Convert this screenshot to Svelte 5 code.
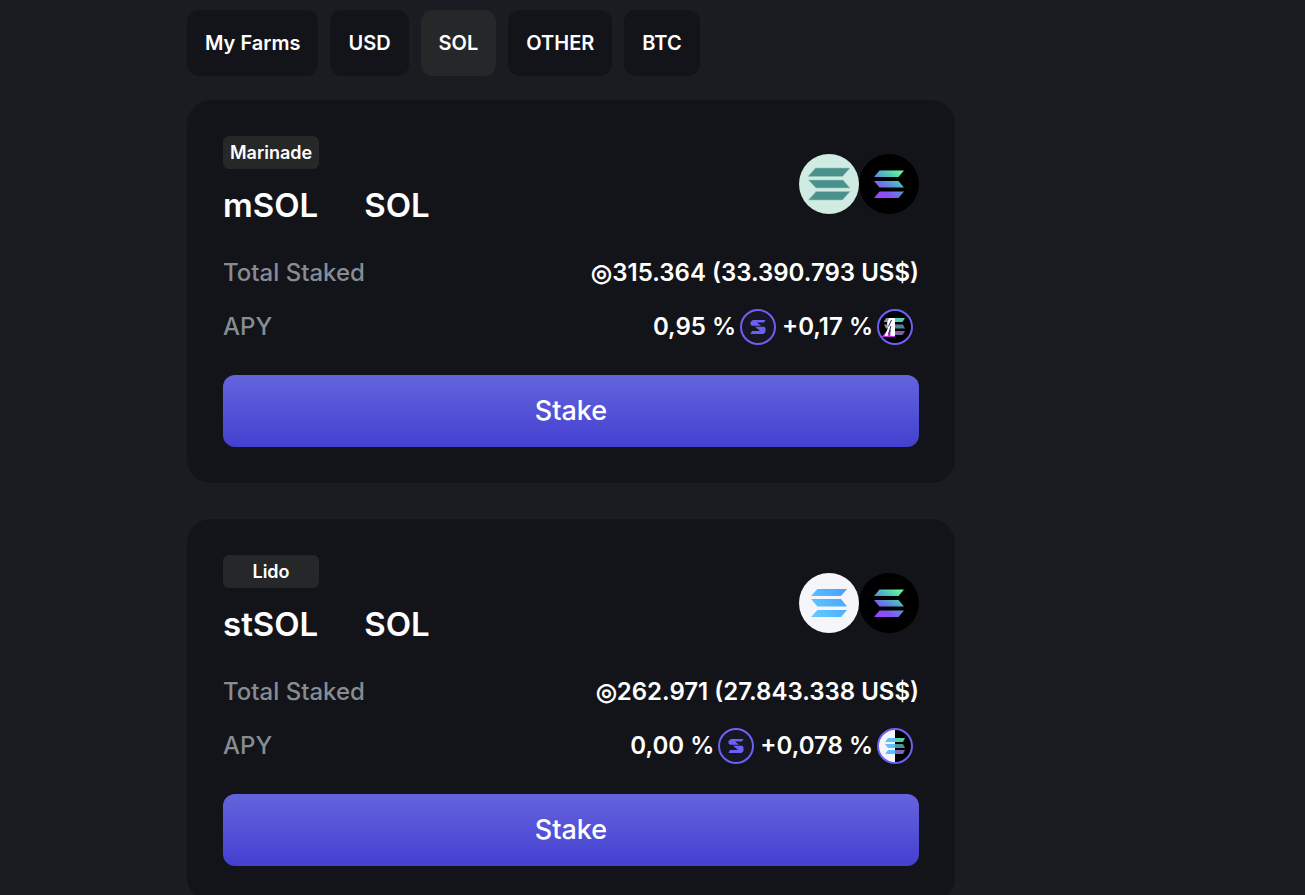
<script>
  const tabs = ['My Farms', 'USD', 'SOL', 'OTHER', 'BTC'];

  const farms = [
    {
      platform: 'Marinade',
      token: 'mSOL',
      pair: 'SOL',
      staked: '◎315.364 (33.390.793 US$)',
      apy: '0,95 %',
      bonus: '+0,17 %'
    },
    {
      platform: 'Lido',
      token: 'stSOL',
      pair: 'SOL',
      staked: '◎262.971 (27.843.338 US$)',
      apy: '0,00 %',
      bonus: '+0,078 %'
    }
  ];

  let activeTab = 'SOL';
</script>

<svelte:head>
  <title>Farms</title>
</svelte:head>

<!-- Gradients shared by the token icons -->
<svg class="defs" width="0" height="0" aria-hidden="true">
  <defs>
    <linearGradient id="sol" gradientUnits="userSpaceOnUse" x1="19" y1="44" x2="38" y2="15">
      <stop offset="0" stop-color="#9945ff" />
      <stop offset="0.25" stop-color="#8752f3" />
      <stop offset="0.5" stop-color="#5c8fdb" />
      <stop offset="0.7" stop-color="#4fc0bd" />
      <stop offset="1" stop-color="#66fb9c" />
    </linearGradient>
    <linearGradient id="lido" gradientUnits="userSpaceOnUse" x1="12" y1="42" x2="46" y2="16">
      <stop offset="0" stop-color="#62cdff" />
      <stop offset="1" stop-color="#489fff" />
    </linearGradient>
    <clipPath id="circle">
      <circle cx="18" cy="18" r="17" />
    </clipPath>
  </defs>
</svg>

<main>
  <nav class="tabs">
    {#each tabs as tab}
      <button class="tab" class:active={tab === activeTab} on:click={() => (activeTab = tab)}>
        {tab}
      </button>
    {/each}
  </nav>

  {#each farms as farm}
    <section class="card">
      <header>
        <div>
          <span class="platform">{farm.platform}</span>
          <h2><span>{farm.token}</span><span>{farm.pair}</span></h2>
        </div>
        <div class="tokens">
          {#if farm.token === 'mSOL'}
            <svg width="60" height="60" viewBox="0 0 60 60" aria-hidden="true">
              <circle cx="30" cy="30" r="30" fill="#d0ece2" />
              <g fill="#4a918d" stroke="#9bc6be" stroke-width="0.6">
                <path d="M16.500 14H51L43.500 22.500H9Z" />
                <path d="M9.500 26H44L51 34H17Z" />
                <path d="M17 37.500H51L43.500 46H9.500Z" />
              </g>
            </svg>
          {:else}
            <svg width="60" height="60" viewBox="0 0 60 60" aria-hidden="true">
              <circle cx="30" cy="30" r="30" fill="#f4f6fa" />
              <g fill="url(#lido)">
                <path d="M18.500 16H48L42 23H12Z" />
                <path d="M12 26H42L48 33.500H18.500Z" />
                <path d="M18.500 37H48L42 44H12Z" />
              </g>
            </svg>
          {/if}
          <svg width="60" height="60" viewBox="0 0 60 60" aria-hidden="true">
            <circle cx="30" cy="30" r="30" fill="#000" />
            <g fill="url(#sol)">
              <path d="M20.500 16.500H45L39.500 23H15Z" />
              <path d="M15 27H39.500L45 33.500H20.500Z" />
              <path d="M20.500 37.500H45L39.500 44H15Z" />
            </g>
          </svg>
        </div>
      </header>

      <dl>
        <div class="row">
          <dt>Total Staked</dt>
          <dd>{farm.staked}</dd>
        </div>
        <div class="row">
          <dt>APY</dt>
          <dd>
            {farm.apy}
            <svg class="reward" width="36" height="36" viewBox="0 0 36 36" aria-hidden="true">
              <circle cx="18" cy="18" r="17" fill="#171624" stroke="#6b62f5" stroke-width="2" />
              <g fill="#6b62f5">
                <path d="M13 11H25.500L24 13.500H17L21 16.800H12L10.500 15.500V13Z" />
                <path d="M15 17.800H24L25.500 19V23L23.500 25H10.500L12 22H20Z" />
              </g>
            </svg>
            {farm.bonus}
            <svg class="reward" width="36" height="36" viewBox="0 0 36 36" aria-hidden="true">
              <g clip-path="url(#circle)">
                <rect width="36" height="36" fill="#000" />
                {#if farm.token === 'mSOL'}
                  <path fill="#5bcfad" d="M16 9H28L25.500 13H16Z" />
                  <path fill="#53819c" d="M16 15.500H26L28 19.500H16Z" />
                  <path fill="#79649f" d="M16 22H28L25.500 26H16Z" />
                  <path fill="#8b94a8" d="M9 9H16L12 13H6.500ZM7 15.500H13L12 19.500H9Z" />
                  <path fill="#c22ed6" d="M9 23H18V28H4.500Z" />
                  <path fill="#fff" d="M12 9H18V27H13.500V20L10.500 27H7.500L11 19L10 14Z" />
                  <path fill="none" stroke="#33283f" d="M14.500 11L11.500 17.500M14 17L11.500 25" />
                {:else}
                  <rect width="18" height="36" fill="#f4f6fa" />
                  <path fill="#60bfff" d="M11 10H18V14H8ZM8 16H18V20H11ZM11 22H18V26H8Z" />
                  <path fill="#58cda9" d="M18 10H28L26 14H18Z" />
                  <path fill="#4c90a0" d="M18 16H26L28 20H18Z" />
                  <path fill="#8068b5" d="M18 22H28L26 26H18Z" />
                {/if}
              </g>
              <circle cx="18" cy="18" r="17" fill="none" stroke="#6b62f5" stroke-width="2" />
            </svg>
          </dd>
        </div>
      </dl>

      <button class="stake">Stake</button>
    </section>
  {/each}
</main>

<style>
  :global(body) {
    background: #1b1c21;
    color: #ffffff;
    font-family: Inter, sans-serif;
  }

  :global(html) {
    scrollbar-width: none;
  }

  .defs {
    position: absolute;
  }

  main {
    box-sizing: border-box;
    max-width: 768px;
    margin-left: 187px;
    padding: 10px 0 36px;
  }

  button {
    border: none;
    color: inherit;
    font-family: inherit;
    cursor: pointer;
  }

  .tabs {
    display: flex;
    gap: 12px;
    margin-bottom: 24px;
  }

  .tab {
    height: 66px;
    padding: 0 18px;
    border-radius: 12px;
    background: #131419;
    font-size: 20px;
    font-weight: 600;
  }

  .tab.active {
    background: #262729;
  }

  .card {
    padding: 36px;
    margin-bottom: 36px;
    border-radius: 24px;
    background: #131419;
  }

  header {
    display: flex;
    align-items: center;
    justify-content: space-between;
    margin-bottom: 23px;
  }

  .platform {
    display: block;
    box-sizing: border-box;
    width: fit-content;
    min-width: 96px;
    padding: 0 7px;
    margin-bottom: 9px;
    border-radius: 6px;
    background: #262729;
    font-size: 18px;
    font-weight: 600;
    line-height: 33px;
    text-align: center;
  }

  h2 {
    display: flex;
    gap: 46px;
    margin: 0;
    font-size: 33px;
    font-weight: 600;
    line-height: 54px;
  }

  .tokens {
    display: flex;
  }

  dl {
    display: flex;
    flex-direction: column;
    gap: 18px;
    margin: 0 0 30px;
  }

  .row {
    display: flex;
    justify-content: space-between;
    font-size: 24px;
    line-height: 36px;
  }

  dt {
    color: #868c94;
    font-weight: 500;
  }

  dd {
    display: flex;
    margin: 0;
    font-weight: 600;
  }

  .reward {
    margin: 0 6px 0 4px;
  }

  .stake {
    display: block;
    width: 100%;
    height: 72px;
    padding: 0 0 2px;
    border-radius: 12px;
    background: linear-gradient(#6464dd, #4440d0);
    font-size: 27px;
    font-weight: 500;
  }
</style>
